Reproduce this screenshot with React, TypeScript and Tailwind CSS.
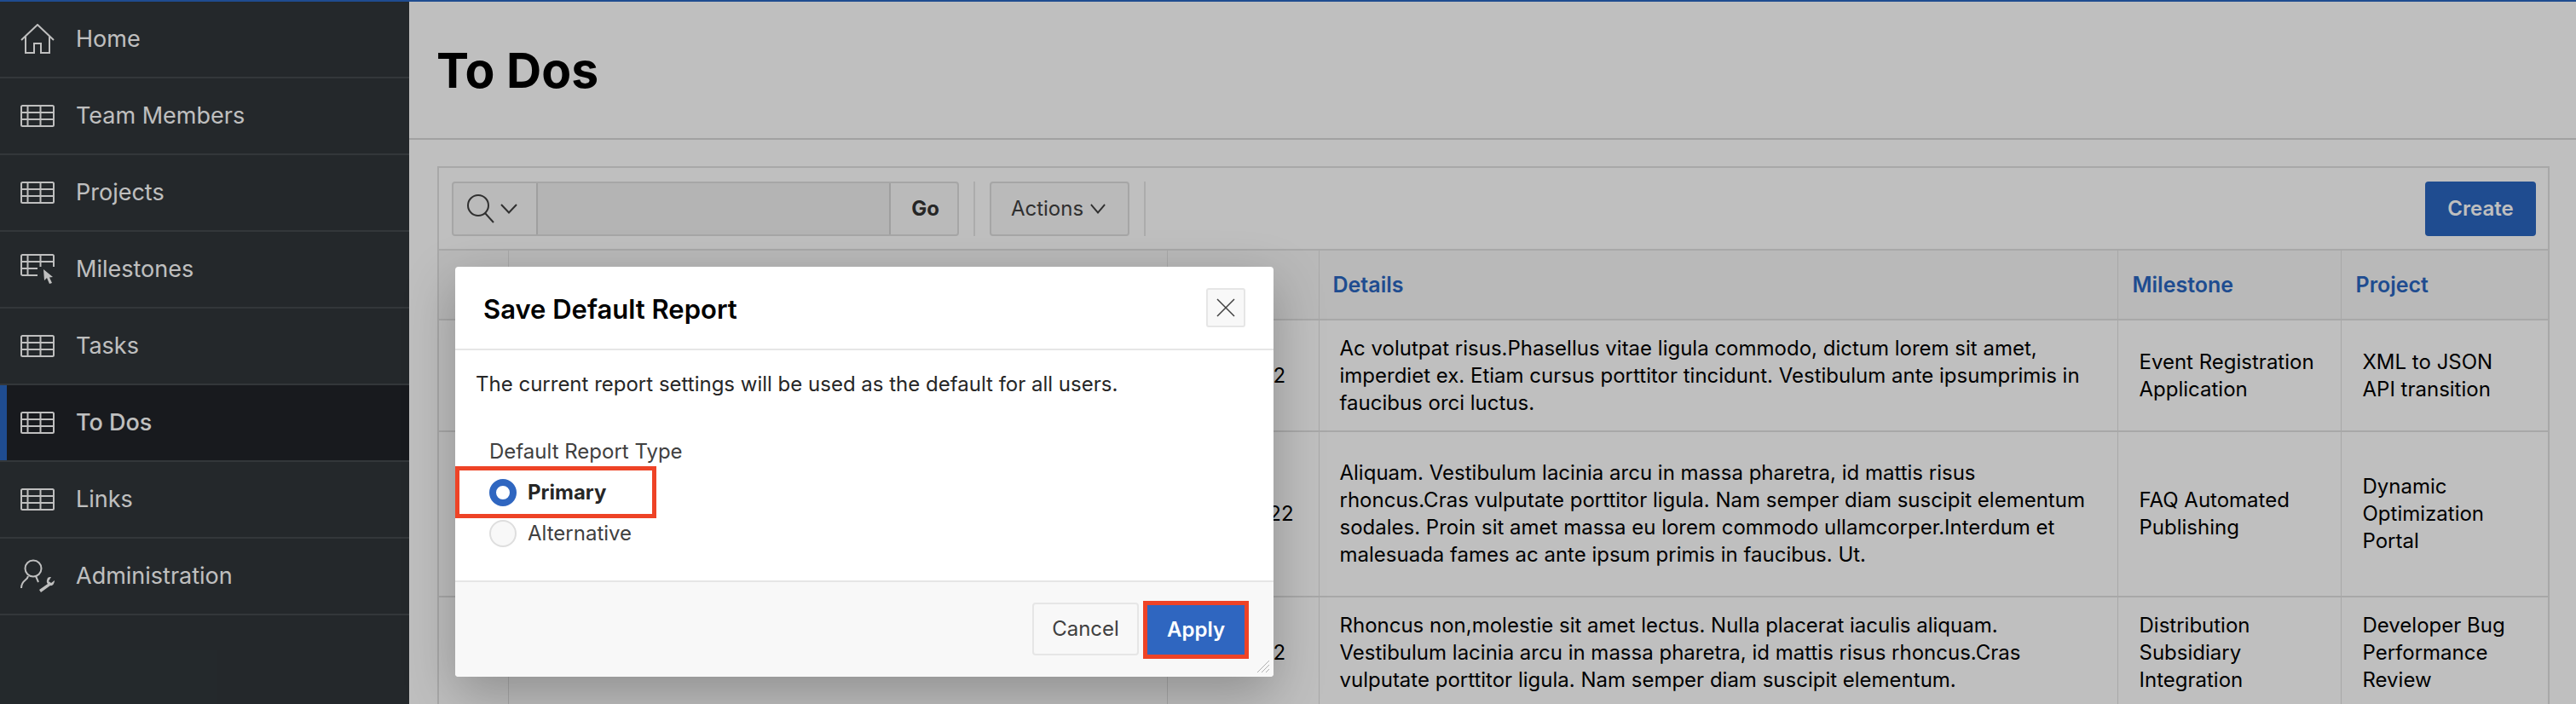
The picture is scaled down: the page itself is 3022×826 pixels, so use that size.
const font = { fontFamily: 'Inter, sans-serif' };

function Chevron({ w = 20 }: { w?: number }) {
  return (
    <svg width={w} height="12" viewBox="0 0 20 12" preserveAspectRatio="none" fill="none" stroke="currentColor" strokeWidth="2">
      <path d="M1 1L10 10.5L19 1" />
    </svg>
  );
}

function TableIcon() {
  return (
    <svg width="40" height="26" viewBox="0 0 40 26" fill="none" stroke="currentColor" strokeWidth="2">
      <rect x="1" y="1" width="38" height="24" rx="1.5" />
      <path d="M1 9H39M1 17H39M8.5 1V25M23.5 1V25" />
    </svg>
  );
}

function HomeIcon() {
  return (
    <svg width="40" height="36" viewBox="0 0 40 36" fill="none" stroke="currentColor" strokeWidth="2">
      <path d="M1 19L20 1L39 19" />
      <path d="M6 15V34H16V23H24V34H34V15" />
    </svg>
  );
}

function MilestoneIcon() {
  return (
    <svg width="40" height="36" viewBox="0 0 40 36" fill="none" stroke="currentColor" strokeWidth="2">
      <path d="M20 25H2.5A1.5 1.5 0 0 1 1 23.5V2.5A1.5 1.5 0 0 1 2.5 1H37.5A1.5 1.5 0 0 1 39 2.5V15" />
      <path d="M1 9H39M1 17H20M8.5 1V25M23.5 1V15" />
      <path d="M27 18L28 31L31 28L34 35L37 34L34 27.5L38 27Z" fill="currentColor" stroke="none" />
    </svg>
  );
}

function AdminIcon() {
  return (
    <svg width="40" height="40" viewBox="0 0 40 40" fill="none" stroke="currentColor" strokeWidth="2">
      <circle cx="15" cy="11" r="9.5" />
      <path d="M9 20C8 26 1 24 1 34M18 20L21 27" />
      <path d="M32 22C30 26 31 28 32 29L22 36L24 39L35 31C38 32 40 28 40 25L36 28L33 26L36 21C34 21 33 21 32 22Z" fill="currentColor" stroke="none" />
    </svg>
  );
}

const navItems = [
  { label: 'Home', icon: <HomeIcon /> },
  { label: 'Team Members', icon: <TableIcon /> },
  { label: 'Projects', icon: <TableIcon /> },
  { label: 'Milestones', icon: <MilestoneIcon /> },
  { label: 'Tasks', icon: <TableIcon /> },
  { label: 'To Dos', icon: <TableIcon />, active: true },
  { label: 'Links', icon: <TableIcon /> },
  { label: 'Administration', icon: <AdminIcon /> },
];

const rows = [
  {
    date: '8/12/2022',
    details: 'Ac volutpat risus.Phasellus vitae ligula commodo, dictum lorem sit amet, imperdiet ex. Etiam cursus porttitor tincidunt. Vestibulum ante ipsumprimis in faucibus orci luctus.',
    milestone: 'Event Registration Application',
    project: 'XML to JSON API transition',
    height: 'h-[131px]',
  },
  {
    date: '12/12/2022',
    details: 'Aliquam. Vestibulum lacinia arcu in massa pharetra, id mattis risus rhoncus.Cras vulputate porttitor ligula. Nam semper diam suscipit elementum sodales. Proin sit amet massa eu lorem commodo ullamcorper.Interdum et malesuada fames ac ante ipsum primis in faucibus. Ut.',
    milestone: 'FAQ Automated Publishing',
    project: 'Dynamic Optimization Portal',
    height: 'h-[194px]',
  },
  {
    date: '8/12/2022',
    details: 'Rhoncus non,molestie sit amet lectus. Nulla placerat iaculis aliquam. Vestibulum lacinia arcu in massa pharetra, id mattis risus rhoncus.Cras vulputate porttitor ligula. Nam semper diam suscipit elementum.',
    milestone: 'Distribution Subsidiary Integration',
    project: 'Developer Bug Performance Review',
    height: 'h-[131px]',
  },
];

export default function App() {
  return (
    <div className="relative h-[826px] w-[3022px] overflow-hidden bg-white" style={font}>
      <div className="h-[2px] bg-[#2a66c0]" />
      <div className="flex h-[824px]">
        {/* Sidebar */}
        <nav className="w-[480px] shrink-0 bg-[#30363a] text-white">
          {navItems.map((item) => (
            <div
              key={item.label}
              className={`flex h-[90px] items-center gap-[25px] border-b-2 border-[#454a4e] pl-[24px] ${
                item.active ? 'bg-[#202328] font-medium shadow-[inset_8px_0_0_#2a66c0]' : ''
              }`}
            >
              <span className="flex w-[40px] justify-center">{item.icon}</span>
              <span className="text-[27px]">{item.label}</span>
            </div>
          ))}
        </nav>

        {/* Main */}
        <main className="min-w-0 flex-1">
          <header className="flex h-[162px] items-center border-b-2 border-[#d8d8d8] pl-[32px]">
            <h1 className="text-[57px] font-bold leading-none text-black">To Dos</h1>
          </header>
          <div className="pt-[31px] pl-[33px] pr-[31px]">
            <section className="border-2 border-[#e0e0e0]">
              <div className="flex h-[97px] items-center border-b-2 border-[#e0e0e0] pl-[15px] pr-[14px]">
                <div className="flex h-[64px] w-[595px] rounded-[4px] border-2 border-[#dedede] bg-[#f8f8f8]">
                  <div className="flex w-[97px] items-center gap-[6px] pl-[15px] text-[#404040]">
                    <svg width="34" height="34" viewBox="0 0 34 34" fill="none" stroke="currentColor" strokeWidth="2">
                      <circle cx="14" cy="13" r="12" />
                      <path d="M22 22L32 33" />
                    </svg>
                    <Chevron />
                  </div>
                  <div className="flex-1 border-x-2 border-[#d4d4d4] bg-[#f0f0f0]" />
                  <div className="flex w-[78px] items-center justify-center pl-[3px] text-[24px] font-bold text-[#333333]">Go</div>
                </div>
                <div className="mx-[17px] h-[64px] w-[2px] bg-[#e6e6e6]" />
                <div className="flex h-[64px] w-[164px] items-center justify-center gap-[8px] rounded-[4px] border-2 border-[#dedede] bg-[#f8f8f8] pr-[3px] text-[24px] text-[#404040]">
                  Actions
                  <Chevron w={18} />
                </div>
                <div className="mx-[17px] h-[64px] w-[2px] bg-[#e6e6e6]" />
                <div className="ml-auto flex h-[64px] w-[130px] items-center justify-center rounded-[4px] bg-[#2a66c0] text-[24px] font-semibold text-white">
                  Create
                </div>
              </div>

              <table className="w-full table-fixed border-collapse text-[24px] leading-[32px] text-black">
                <colgroup>
                  <col className="w-[81px]" />
                  <col className="w-[773px]" />
                  <col className="w-[178px]" />
                  <col className="w-[937px]" />
                  <col className="w-[262px]" />
                  <col />
                </colgroup>
                <thead>
                  <tr className="h-[81px] bg-[#f7f7f7] text-left text-[25px] text-[#2a66c0]">
                    <th className="border-r border-[#e0e0e0]" />
                    <th className="border-r border-[#e0e0e0]" />
                    <th className="border-r border-[#e0e0e0]" />
                    <th className="border-r border-[#e0e0e0] pl-[16px] font-semibold">Details</th>
                    <th className="border-r border-[#e0e0e0] pl-[17px] font-semibold">Milestone</th>
                    <th className="pl-[17px] font-semibold">Project</th>
                  </tr>
                </thead>
                <tbody>
                  {rows.map((row) => (
                    <tr key={row.details} className={`${row.height} border-t-2 border-[#e0e0e0]`}>
                      <td className="border-r border-[#e0e0e0]" />
                      <td className="border-r border-[#e0e0e0]" />
                      <td className="border-r border-[#e0e0e0] pl-[23px]">{row.date}</td>
                      <td className="border-r border-[#e0e0e0] px-[24px] align-middle">{row.details}</td>
                      <td className="border-r border-[#e0e0e0] px-[25px]">{row.milestone}</td>
                      <td className="px-[25px]">{row.project}</td>
                    </tr>
                  ))}
                </tbody>
              </table>
            </section>
          </div>
        </main>
      </div>

      {/* Dim layer */}
      <div className="absolute inset-0 bg-black/25" />

      {/* Dialog */}
      <div className="absolute left-[534px] top-[313px] flex h-[481px] w-[960px] flex-col rounded-[4px] bg-white shadow-[0_20px_60px_rgba(0,0,0,0.25)]">
        <div className="flex h-[98px] items-center justify-between border-b-2 border-[#e6e6e6] pl-[33px] pr-[33px]">
          <h2 className="pt-[4px] text-[31px] font-semibold text-black">Save Default Report</h2>
          <button className="flex h-[46px] w-[46px] items-center justify-center rounded-[3px] border-2 border-[#e6e6e6] bg-[#f8f8f8] text-[#404040]">
            <svg width="22" height="22" viewBox="0 0 22 22" fill="none" stroke="currentColor" strokeWidth="1.5">
              <path d="M1 1L21 21M21 1L1 21" />
            </svg>
          </button>
        </div>
        <div className="flex-1 text-[24px]">
          <p className="pl-[24px] pt-[24px] leading-[32px] text-[#262626]">The current report settings will be used as the default for all users.</p>
          <div className="pl-[40px] pt-[47px] leading-[32px] text-[#404040]">Default Report Type</div>
          <div className="mt-[1px] flex h-[61px] w-[236px] items-center gap-[13px] border-[5px] border-[#ee4326] pl-[35px]">
            <span className="h-[32px] w-[32px] rounded-full border-[8px] border-[#2f66c0] bg-white" />
            <span className="font-bold text-[#262626]">Primary</span>
          </div>
          <div className="mt-[2px] flex h-[32px] items-center gap-[13px] pl-[40px] text-[#404040]">
            <span className="h-[32px] w-[32px] rounded-full border-2 border-[#dedede] bg-[#f8f8f8]" />
            <span>Alternative</span>
          </div>
        </div>
        <div className="relative flex h-[113px] items-start justify-end rounded-b-[4px] border-t-2 border-[#e6e6e6] bg-[#f8f8f8] pr-[29px] pt-[22px]">
          <button className="mt-[2px] mr-[5px] h-[62px] w-[125px] rounded-[4px] border-2 border-[#e6e6e6] bg-[#f8f8f8] text-[24px] text-[#404040]">Cancel</button>
          <button className="h-[68px] w-[124px] border-[5px] border-[#ee4326] bg-[#2f66c0] text-[24px] font-semibold text-white">Apply</button>
          <svg className="absolute bottom-[4px] right-[4px]" width="16" height="16" viewBox="0 0 16 16" stroke="#b0b0b0" strokeWidth="1">
            <path d="M1 15L15 1M6 15L15 6M11 15L15 11" />
          </svg>
        </div>
      </div>
    </div>
  );
}
